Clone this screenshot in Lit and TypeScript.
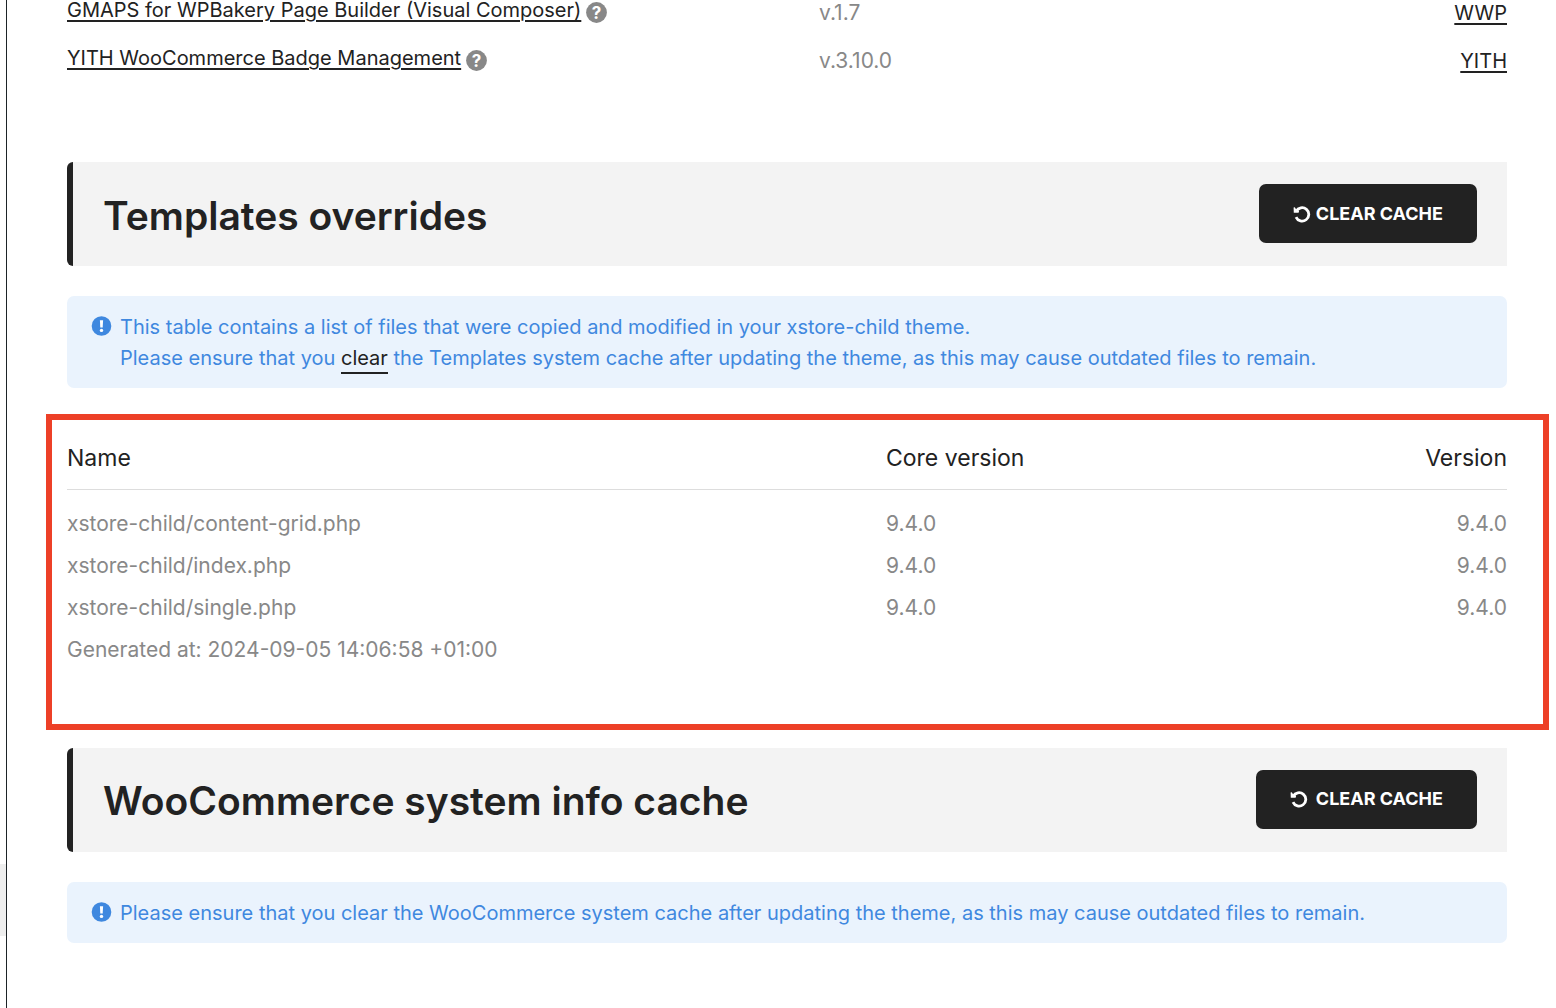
import { LitElement, html, css, svg } from "lit";
import { customElement, property } from "lit/decorators.js";

const plugins = [
  { name: "GMAPS for WPBakery Page Builder (Visual Composer)", version: "v.1.7", author: "WWP" },
  { name: "YITH WooCommerce Badge Management", version: "v.3.10.0", author: "YITH" },
];

const overrides = [
  { name: "xstore-child/content-grid.php", core: "9.4.0", version: "9.4.0" },
  { name: "xstore-child/index.php", core: "9.4.0", version: "9.4.0" },
  { name: "xstore-child/single.php", core: "9.4.0", version: "9.4.0" },
];

@customElement("section-banner")
export class SectionBanner extends LitElement {
  @property() heading = "";
  @property({ type: Boolean, reflect: true }) spaced = false;

  static styles = css`
    :host {
      display: flex;
      align-items: center;
      justify-content: space-between;
      box-sizing: border-box;
      min-height: 104px;
      padding: 20px 30px;
      border-left: 6px solid #222;
      border-radius: 6px 0 0 6px;
      background: #f3f3f3;
    }
    .title {
      margin: 0;
      padding-top: 3px;
      font-size: 39px;
      line-height: 48px;
      font-weight: 600;
    }
    .button {
      display: flex;
      align-items: center;
      gap: 5px;
      height: 59px;
      padding: 0 34px;
      margin-bottom: 1px;
      border: 0;
      border-radius: 7px;
      background: #222;
      color: #fff;
      font: 700 18px/24px Inter, "Liberation Sans", sans-serif;
      cursor: pointer;
    }
    :host([spaced]) .button {
      gap: 8px;
    }
    .icon {
      width: 18px;
      height: 18px;
    }
  `;

  render() {
    return html`
      <h2 class="title">${this.heading}</h2>
      <button class="button" type="button">
        <svg class="icon" viewBox="0 0 18 18" aria-hidden="true">
          <path d="M3.2 6.2A6.7 6.7 0 1 1 3 12.2" fill="none" stroke="#fff" stroke-width="2.8" />
          <path d="M.6 2.4l1.2-.2 1.4 2.2 3 1.4-.6 2H.8z" fill="#fff" />
        </svg>
        CLEAR CACHE
      </button>
    `;
  }
}

@customElement("info-notice")
export class InfoNotice extends LitElement {
  static styles = css`
    :host {
      display: flex;
      gap: 8px;
      margin-top: 30px;
      padding: 16px 24px 14px;
      border-radius: 7px;
      background: #eaf3fd;
      color: #3f88df;
      font-size: 20px;
      line-height: 31px;
    }
    .icon {
      flex: none;
      width: 21px;
      height: 21px;
      margin-top: 4px;
    }
  `;

  render() {
    return html`
      <svg class="icon" viewBox="0 0 21 21" aria-hidden="true">
        <circle cx="10.5" cy="10" r="9.8" fill="#3f88df" />
        <path d="M8.9 4.2h3.2l-.4 7.2H9.3z" fill="#fff" />
        <circle cx="10.5" cy="14.4" r="1.7" fill="#fff" />
      </svg>
      <div><slot></slot></div>
    `;
  }
}

@customElement("app-root")
export class AppRoot extends LitElement {
  static styles = css`
    :host {
      display: flex;
      min-height: 100vh;
      overflow: hidden;
      background: #fff;
      color: #222;
      font-family: Inter, "Liberation Sans", sans-serif;
      font-size: 20px;
    }
    .rail {
      display: flex;
      flex-direction: column;
      justify-content: flex-end;
      width: 6px;
      border-right: 1px solid #1d2327;
    }
    .marker {
      height: 72px;
      margin-bottom: 72px;
      background: #eee;
    }
    .content {
      flex: 1;
      min-width: 0;
      padding: 0 49px 60px 60px;
    }
    table {
      width: 100%;
      border-collapse: collapse;
      table-layout: fixed;
    }
    th,
    td {
      padding: 0;
      text-align: left;
      font-weight: 400;
    }
    tr > :last-child:not(:first-child) {
      text-align: right;
    }
    a {
      color: #222;
      text-decoration: underline;
      text-decoration-thickness: 2px;
      text-underline-offset: 3px;
    }
    .plugins {
      margin: -12px 0 78px;
      color: #888;
    }
    .plugins td {
      height: 48px;
      line-height: 46px;
      vertical-align: bottom;
    }
    .plugins .plugin {
      width: 752px;
      vertical-align: top;
    }
    .plugin-line {
      display: flex;
      align-items: center;
      gap: 5px;
      height: 44px;
    }
    .help {
      width: 21px;
      height: 21px;
      margin-top: 4px;
    }
    .help-mark {
      fill: #fff;
      font-size: 17px;
      font-weight: 700;
      text-anchor: middle;
    }
    .version {
      font-size: 21px;
    }
    .clear {
      padding-bottom: 2px;
      border-bottom: 2px solid #222;
      text-decoration: none;
    }
    .highlight {
      margin: 26px -42px 18px -21px;
      padding: 6px 36px 53px 15px;
      border: 6px solid #ed4027;
    }
    .overrides {
      color: #888;
      font-size: 21px;
      line-height: 42px;
    }
    .overrides th {
      height: 63px;
      border-bottom: 1px solid #ddd;
      color: #222;
      font-size: 23px;
    }
    .overrides .file {
      width: 819px;
    }
    .overrides tbody::before {
      content: "";
      display: table-row;
      height: 13px;
    }
  `;

  render() {
    return html`
      <div class="rail"><div class="marker"></div></div>
      <main class="content">
        <table class="plugins">
          <tbody>
            ${plugins.map(
              (p) => html`<tr>
                <td class="plugin">
                  <div class="plugin-line">
                    <a href="#">${p.name}</a>
                    <svg class="help" viewBox="0 0 21 21" aria-hidden="true">
                      <circle cx="10.5" cy="10.5" r="10.4" fill="#888" />
                      ${svg`<text class="help-mark" x="10.5" y="16.5">?</text>`}
                    </svg>
                  </div>
                </td>
                <td class="version">${p.version}</td>
                <td><a href="#">${p.author}</a></td>
              </tr>`
            )}
          </tbody>
        </table>

        <section-banner heading="Templates overrides"></section-banner>
        <info-notice>
          This table contains a list of files that were copied and modified in your xstore-child theme.<br />
          Please ensure that you <a class="clear" href="#">clear</a> the Templates system cache after updating the
          theme, as this may cause outdated files to remain.
        </info-notice>

        <div class="highlight">
          <table class="overrides">
            <thead>
              <tr>
                <th class="file" scope="col">Name</th>
                <th scope="col">Core version</th>
                <th scope="col">Version</th>
              </tr>
            </thead>
            <tbody>
              ${overrides.map(
                (o) => html`<tr>
                  <td>${o.name}</td>
                  <td>${o.core}</td>
                  <td>${o.version}</td>
                </tr>`
              )}
              <tr>
                <td colspan="3">Generated at: 2024-09-05 14:06:58 +01:00</td>
              </tr>
            </tbody>
          </table>
        </div>

        <section-banner heading="WooCommerce system info cache" spaced></section-banner>
        <info-notice>
          Please ensure that you clear the WooCommerce system cache after updating the theme, as this may cause outdated
          files to remain.
        </info-notice>
      </main>
    `;
  }
}
